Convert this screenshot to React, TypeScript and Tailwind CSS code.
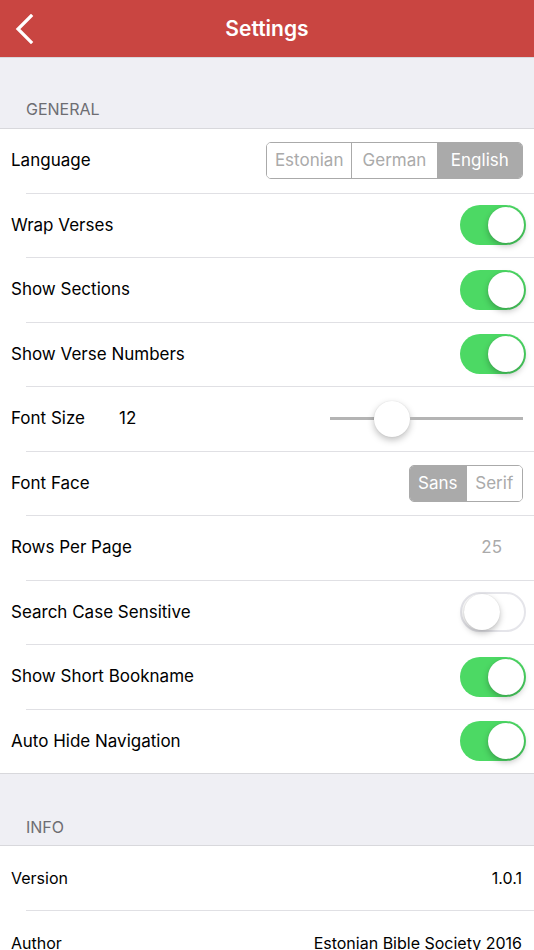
import React from "react";

const font = { fontFamily: "Inter, 'Noto Sans', sans-serif" };

const Toggle = ({ on }: { on: boolean }) => (
  <div
    className={`w-[66px] h-[40px] rounded-full flex items-center p-[2px] ${
      on ? "bg-[#4cd964] justify-end" : "bg-white border-2 border-[#e5e5ea] justify-start p-0"
    }`}
  >
    <div className="w-[36px] h-[36px] rounded-full bg-white shadow-[0_3px_6px_rgba(0,0,0,0.25),0_0_1px_rgba(0,0,0,0.15)]" />
  </div>
);

const Segmented = ({ items, active, width }: { items: string[]; active: number; width: string }) => (
  <div className={`flex h-[37px] border border-[#aaaaaa] rounded-[5px] overflow-hidden ${width}`}>
    {items.map((it, i) => (
      <div
        key={it}
        className={`flex-1 flex items-center justify-center text-[17px] ${
          i > 0 ? "border-l border-[#aaaaaa]" : ""
        } ${i === active ? "bg-[#aaaaaa] text-white" : "bg-white text-[#aaaaaa]"}`}
      >
        {it}
      </div>
    ))}
  </div>
);

const Sep = () => <div className="ml-[26px] h-px bg-[#e0e0e4]" />;

const Row = ({ label, children }: { label: React.ReactNode; children?: React.ReactNode }) => (
  <div className="h-[63.5px] flex items-center justify-between pl-[11px] pr-[8px]">
    <div className="text-[17px] text-black">{label}</div>
    {children}
  </div>
);

export default function App() {
  return (
    <div className="w-[534px] h-[950px] overflow-hidden bg-[#efeff4]" style={font}>
      {/* Nav bar */}
      <div className="h-[57px] bg-[#c94541] flex items-center relative">
        <svg className="absolute left-[14px] top-[14px]" width="22" height="30" viewBox="0 0 22 30">
          <path d="M17 2 L4 15 L17 28" fill="none" stroke="white" strokeWidth="3.2" strokeLinecap="square" />
        </svg>
        <div className="flex-1 text-center text-white text-[21px] font-semibold">Settings</div>
      </div>
      <div className="h-px bg-[#d8d8dc]" />

      {/* General */}
      <div className="h-[70px] flex items-end pl-[26px] pb-[7px] text-[16px] text-[#6d6d72]">GENERAL</div>
      <div className="bg-white border-y border-[#d8d8dc]">
        <Row label="Language">
          <div className="mr-[3px]">
            <Segmented items={["Estonian", "German", "English"]} active={2} width="w-[257px]" />
          </div>
        </Row>
        <Sep />
        <Row label="Wrap Verses">
          <Toggle on />
        </Row>
        <Sep />
        <Row label="Show Sections">
          <Toggle on />
        </Row>
        <Sep />
        <Row label="Show Verse Numbers">
          <Toggle on />
        </Row>
        <Sep />
        <Row
          label={
            <div className="flex gap-[34px]">
              <span>Font Size</span>
              <span>12</span>
            </div>
          }
        >
          <div className="w-[193px] mr-[3px] flex items-center">
            <div className="w-[44px] h-[3px] bg-[#b4b4b4]" />
            <div className="w-[36px] h-[36px] rounded-full bg-white shrink-0 shadow-[0_3px_7px_rgba(0,0,0,0.25),0_0_1px_rgba(0,0,0,0.15)]" />
            <div className="flex-1 h-[3px] bg-[#b4b4b4]" />
          </div>
        </Row>
        <Sep />
        <Row label="Font Face">
          <div className="mr-[3px]">
            <Segmented items={["Sans", "Serif"]} active={0} width="w-[114px]" />
          </div>
        </Row>
        <Sep />
        <Row label="Rows Per Page">
          <div className="text-[17px] text-[#aaaaaa] mr-[24px]">25</div>
        </Row>
        <Sep />
        <Row label="Search Case Sensitive">
          <Toggle on={false} />
        </Row>
        <Sep />
        <Row label="Show Short Bookname">
          <Toggle on />
        </Row>
        <Sep />
        <Row label="Auto Hide Navigation">
          <Toggle on />
        </Row>
      </div>

      {/* Info */}
      <div className="h-[71px] flex items-end pl-[26px] pb-[6px] text-[16px] text-[#6d6d72]">INFO</div>
      <div className="bg-white border-t border-[#d8d8dc]">
        <div className="h-[64px] flex items-center justify-between pl-[11px] pr-[12px] text-[16px] text-black">
          <span>Version</span>
          <span>1.0.1</span>
        </div>
        <Sep />
        <div className="h-[64px] flex items-center justify-between pl-[11px] pr-[12px] text-[16px] text-black">
          <span>Author</span>
          <span>Estonian Bible Society 2016</span>
        </div>
      </div>
    </div>
  );
}
